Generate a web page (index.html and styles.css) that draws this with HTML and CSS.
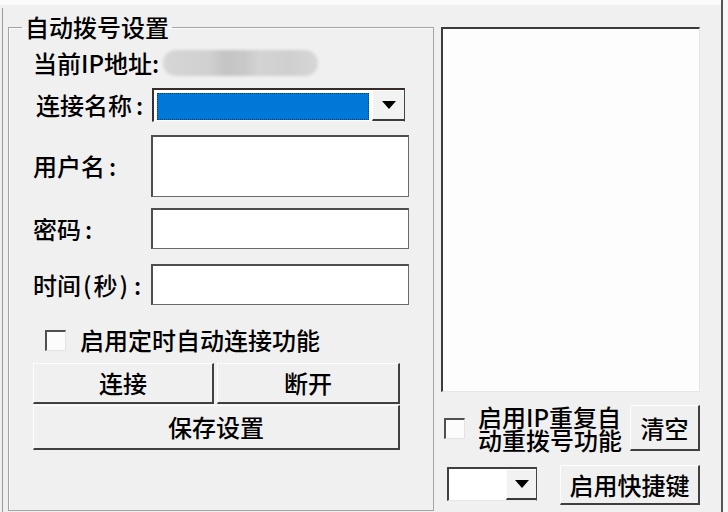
FILE: index.html
```html
<!DOCTYPE html>
<html lang="zh-CN">
<head>
<meta charset="utf-8">
<link rel="stylesheet" href="styles.css">
</head>
<body>
<div class="app">
  <div class="content">
    <div class="topstrip"></div>
    <div class="main">
      <div class="edge"></div>
      <fieldset class="group">
        <legend>自动拨号设置</legend>
        <div class="ip-row"><span class="ip-label">当前IP地址:</span><span class="blur"></span></div>
        <div class="row r-combo">
          <label class="lbl lbl-indent">连接名称<span class="colon">:</span></label>
          <div class="combo">
            <div class="combo-sel"></div>
            <div class="combo-btn"><span class="tri"></span></div>
          </div>
        </div>
        <div class="row r-user">
          <label class="lbl">用户名<span class="colon">:</span></label>
          <div class="textbox tall"></div>
        </div>
        <div class="row r-pass">
          <label class="lbl">密码<span class="colon">:</span></label>
          <div class="textbox"></div>
        </div>
        <div class="row r-time">
          <label class="lbl">时间<span class="paren">(</span>秒<span class="paren">)</span><span class="colon">:</span></label>
          <div class="textbox"></div>
        </div>
        <div class="check-row">
          <span class="checkbox"></span>
          <span class="check-label">启用定时自动连接功能</span>
        </div>
        <div class="btn-row">
          <div class="btn b-conn">连接</div>
          <div class="btn b-disc">断开</div>
        </div>
        <div class="btn b-save">保存设置</div>
      </fieldset>
      <div class="right">
        <div class="listbox"></div>
        <div class="r-row1">
          <span class="checkbox"></span>
          <span class="two-line">启用IP重复自<br>动重拨号功能</span>
          <div class="btn b-clear">清空</div>
        </div>
        <div class="r-row2">
          <div class="mini-combo">
            <div class="mini-field"></div>
            <div class="mini-btn"><span class="tri"></span></div>
          </div>
          <div class="btn b-hotkey">启用快捷键</div>
        </div>
      </div>
    </div>
  </div>
  <div class="vline"></div>
  <div class="tail"></div>
</div>
</body>
</html>
```

FILE: styles.css
```css
* { box-sizing: border-box; }

html, body {
  margin: 0;
  padding: 0;
}

body {
  width: 728px;
  height: 512px;
  overflow: hidden;
  background: #f0f0f0;
  font-family: "Noto Sans CJK SC", "Noto Sans", sans-serif;
  font-size: 24px;
  font-weight: 500;
  color: #000;
}

.app {
  display: flex;
  height: 512px;
}

.content {
  width: 721px;
  display: flex;
  flex-direction: column;
}

.topstrip {
  height: 5px;
  background: #fbfbfb;
}

.main {
  display: flex;
  align-items: flex-start;
  padding-left: 2px;
  flex: 1;
}

.edge {
  width: 1px;
  align-self: stretch;
  margin-top: 3px;
  background: #9c9c9c;
}

.group {
  margin: 7px 0 0 5px;
  padding: 0 0 0 24px;
  width: 426px;
  height: 499px;
  border: 1px solid #a4a4a4;
  box-shadow: inset 1px 1px 0 #fafafa;
  min-inline-size: 0;
}

.group legend {
  margin-left: -11px;
  padding: 0 3px;
  line-height: 30px;
  height: 30px;
}

.ip-row {
  margin-top: 8px;
  height: 26px;
  display: flex;
  align-items: center;
  line-height: 26px;
}

.blur {
  display: block;
  width: 155px;
  height: 26px;
  margin-left: 4px;
  border-radius: 13px;
  background: linear-gradient(90deg, #d6d6d6 0%, #d0d0d0 30%, #c4c4c4 40%, #c8c8c8 52%, #d3d3d3 62%, #cfcfcf 80%, #d6d6d6 100%);
  filter: blur(1.5px);
}

.row {
  display: flex;
  align-items: center;
}

.lbl {
  width: 118px;
  line-height: 28px;
  white-space: nowrap;
}

.colon { margin-left: 4px; }
.paren { padding: 0 2px; }

.lbl-indent { padding-left: 3px; }

.r-combo { margin-top: 12px; height: 34px; }
.r-user { margin-top: 13px; height: 62px; }
.r-pass { margin-top: 11px; height: 41px; }
.r-time { margin-top: 15px; height: 41px; }

.combo {
  margin-left: 1px;
  width: 253px;
  height: 34px;
  display: flex;
  border-style: solid;
  border-width: 2px 1px 1px 2px;
  border-color: #3b2a2a #454545 #f4f4f4 #3b3030;
  background: #fff;
}

.combo-sel {
  margin: 3px 3px 1px 3px;
  width: 212px;
  background: #0078d7;
  border: 1px dotted #0a3c78;
}

.combo-btn {
  margin-left: auto;
  width: 32px;
  margin-top: 1px;
  background: #f2f2f2;
  border-left: 1px solid #fdfdfd;
  border-bottom: 2px solid #3a3a3a;
  display: flex;
  align-items: center;
  justify-content: center;
}

.tri {
  display: block;
  width: 0;
  height: 0;
  border-left: 7px solid transparent;
  border-right: 7px solid transparent;
  border-top: 8px solid #000;
}

.textbox {
  width: 258px;
  height: 41px;
  background: #fff;
  border-style: solid;
  border-width: 2px 1px 1px 2px;
  border-color: #4e4e4e #6a6a6a #6a6a6a #4e4e4e;
}

.textbox.tall { height: 62px; }

.check-row {
  margin-top: 23px;
  height: 24px;
  display: flex;
  align-items: center;
  padding-left: 12px;
  line-height: 24px;
}

.checkbox {
  display: block;
  flex: none;
  width: 21px;
  height: 21px;
  background: #fcfcfc;
  border-style: solid;
  border-width: 2px 1px 1px 2px;
  border-color: #505050 #e2e2e2 #e2e2e2 #505050;
}

.check-label { margin-left: 14px; white-space: nowrap; }

.btn {
  display: flex;
  align-items: center;
  justify-content: center;
  background: #f0f0f0;
  border-style: solid;
  border-width: 1px 2px 2px 1px;
  border-color: #fdfdfd #404040 #404040 #fdfdfd;
  line-height: 28px;
  white-space: nowrap;
}

.btn-row {
  margin-top: 11px;
  display: flex;
  gap: 3px;
}

.b-conn { width: 181px; height: 41px; }
.b-disc { width: 183px; height: 41px; }
.b-save { margin-top: 1px; width: 367px; height: 45px; }

.right {
  margin: 22px 0 0 7px;
  width: 259px;
}

.listbox {
  height: 365px;
  background: #fdfdfd;
  border-style: solid;
  border-width: 2px 1px 1px 2px;
  border-color: #3c3c3c #e6e6e6 #e6e6e6 #3c3c3c;
}

.r-row1 {
  margin-top: 13px;
  height: 46px;
  display: flex;
  align-items: center;
  padding-left: 3px;
}

.two-line {
  margin-left: 13px;
  width: 152px;
  font-size: 24px;
  line-height: 23px;
  white-space: nowrap;
}

.b-clear { width: 70px; height: 46px; }

.r-row2 {
  margin-top: 14px;
  display: flex;
  align-items: flex-start;
}

.mini-combo {
  margin: 2px 0 0 6px;
  width: 90px;
  height: 34px;
  display: flex;
  background: #fff;
  border-style: solid;
  border-width: 2px 1px 1px 2px;
  border-color: #404040 #454545 #e8e8e8 #404040;
}

.mini-field { flex: 1; }

.mini-btn {
  width: 30px;
  margin-top: 1px;
  background: #f2f2f2;
  border-left: 1px solid #fdfdfd;
  border-bottom: 2px solid #3a3a3a;
  display: flex;
  align-items: center;
  justify-content: center;
}

.b-hotkey { margin-left: 23px; width: 140px; height: 40px; }

.vline {
  width: 2px;
  background: #555;
}

.tail {
  flex: 1;
  background: #f8f8f8;
}
```
